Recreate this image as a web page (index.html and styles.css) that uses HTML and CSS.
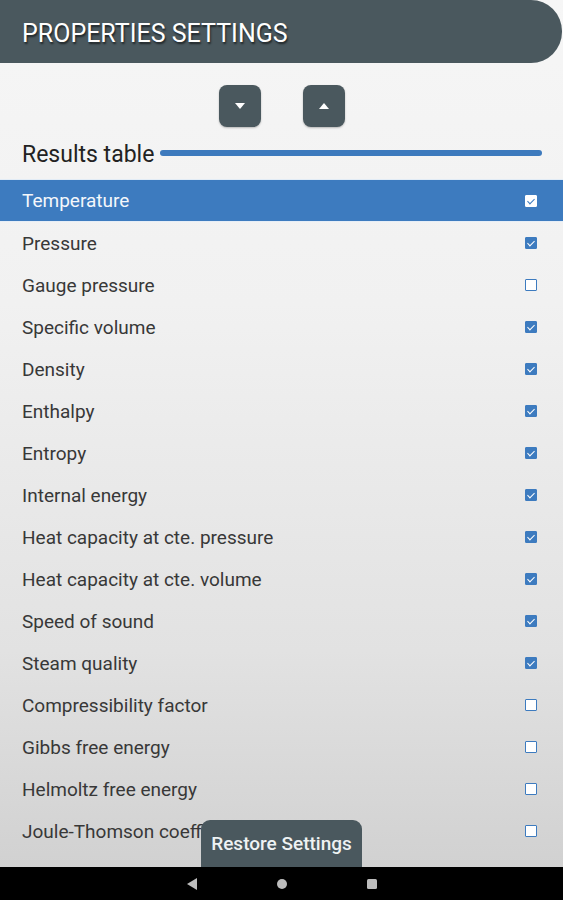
FILE: index.html
```html
<!DOCTYPE html>
<html>
<head>
<meta charset="utf-8">
<link rel="stylesheet" href="styles.css">
</head>
<body>
<div class="screen">
  <div class="main">
    <header class="header"><h1 class="title">PROPERTIES SETTINGS</h1></header>
    <div class="arrows">
      <button class="arrow"><svg width="14" height="14" viewBox="0 0 14 14"><path d="M2 4 H12 L7 10 Z" fill="#fff"/></svg></button>
      <button class="arrow"><svg width="14" height="14" viewBox="0 0 14 14"><path d="M2 10 H12 L7 4 Z" fill="#fff"/></svg></button>
    </div>
    <div class="section">
      <span class="section-label">Results table</span>
      <span class="section-line"></span>
    </div>
    <ul class="list">
      <li class="row selected"><span>Temperature</span><span class="cb on"></span></li>
      <li class="row"><span>Pressure</span><span class="cb on"></span></li>
      <li class="row"><span>Gauge pressure</span><span class="cb"></span></li>
      <li class="row"><span>Specific volume</span><span class="cb on"></span></li>
      <li class="row"><span>Density</span><span class="cb on"></span></li>
      <li class="row"><span>Enthalpy</span><span class="cb on"></span></li>
      <li class="row"><span>Entropy</span><span class="cb on"></span></li>
      <li class="row"><span>Internal energy</span><span class="cb on"></span></li>
      <li class="row"><span>Heat capacity at cte. pressure</span><span class="cb on"></span></li>
      <li class="row"><span>Heat capacity at cte. volume</span><span class="cb on"></span></li>
      <li class="row"><span>Speed of sound</span><span class="cb on"></span></li>
      <li class="row"><span>Steam quality</span><span class="cb on"></span></li>
      <li class="row"><span>Compressibility factor</span><span class="cb"></span></li>
      <li class="row"><span>Gibbs free energy</span><span class="cb"></span></li>
      <li class="row"><span>Helmoltz free energy</span><span class="cb"></span></li>
      <li class="row"><span>Joule-Thomson coefficient</span><span class="cb"></span></li>
    </ul>
    <button class="restore">Restore Settings</button>
  </div>
  <nav class="navbar">
    <svg width="12" height="14" viewBox="0 0 12 14"><path d="M11 1 V13 L1 7 Z" fill="#bdbdbd"/></svg>
    <svg width="12" height="12" viewBox="0 0 12 12"><circle cx="6" cy="6" r="5" fill="#bdbdbd"/></svg>
    <svg width="12" height="12" viewBox="0 0 12 12"><rect x="1" y="1" width="10" height="10" rx="1.5" fill="#bdbdbd"/></svg>
  </nav>
</div>
</body>
</html>
```
FILE: styles.css
```css
html, body {
  margin: 0;
  padding: 0;
}
body {
  font-family: Roboto, "Noto Sans", sans-serif;
  width: 563px;
  height: 900px;
  overflow: hidden;
}
.screen {
  display: flex;
  flex-direction: column;
  height: 900px;
}
.main {
  position: relative;
  flex: 1;
  overflow: hidden;
  background: linear-gradient(to bottom, #f6f6f6 0%, #f1f1f1 35%, #e2e2e2 75%, #d1d1d1 100%);
  display: flex;
  flex-direction: column;
}
.header {
  height: 63px;
  margin-right: 1px;
  background: #4a585e;
  border-radius: 0 31px 31px 0;
  display: flex;
  align-items: center;
  padding-left: 22px;
  flex-shrink: 0;
}
.title {
  margin: 0;
  margin-top: 3px;
  font-size: 25px;
  font-weight: 400;
  color: #ffffff;
  text-shadow: 1px 2px 2px rgba(0,0,0,0.6);
  letter-spacing: 0;
}
.arrows {
  display: flex;
  justify-content: center;
  gap: 42px;
  margin-top: 22px;
  padding-left: 1px;
}
.arrow {
  width: 42px;
  height: 42px;
  border: none;
  border-radius: 8px;
  background: #4a585e;
  display: flex;
  align-items: center;
  justify-content: center;
  padding: 0;
  box-shadow: 0 1px 2px rgba(0,0,0,0.25);
}
.section {
  display: flex;
  align-items: center;
  margin-top: 12px;
  padding: 0 21px 0 22px;
  height: 30px;
}
.section-label {
  font-size: 23px;
  color: #222;
  margin-right: 6px;
}
.section-line {
  flex: 1;
  height: 6px;
  border-radius: 3px;
  background: #3d7abd;
  margin-top: -3px;
}
.list {
  list-style: none;
  margin: 10px 0 0;
  padding: 0;
  border-top: 1px solid #e2ecf6;
}
.row {
  height: 42px;
  display: flex;
  align-items: center;
  justify-content: space-between;
  padding: 0 26px 0 22px;
  font-size: 19px;
  color: #383838;
}
.row.selected {
  background: #3d7bbf;
  color: #f4f7fb;
  height: 41px;
  border-bottom: 1px solid #e6eef7;
}
.cb {
  width: 10px;
  height: 10px;
  border: 1px solid #3d7bbf;
  background: #fff;
  border-radius: 1px;
  position: relative;
}
.cb.on {
  background: #3d7bbf;
}
.cb.on::after {
  content: "";
  position: absolute;
  left: 3px;
  top: 1px;
  width: 3px;
  height: 6px;
  border: solid #fff;
  border-width: 0 1.5px 1.5px 0;
  transform: rotate(45deg);
}
.selected .cb.on {
  background: #fff;
  border-color: #fff;
}
.selected .cb.on::after {
  border-color: #3d7bbf;
}
.restore {
  position: absolute;
  left: 201px;
  bottom: 0;
  width: 161px;
  height: 47px;
  border: none;
  border-radius: 9px 9px 0 0;
  background: #4a585e;
  color: #eef2f3;
  font-family: Roboto, sans-serif;
  font-size: 19px;
  font-weight: 500;
  padding: 0;
}
.navbar {
  height: 33px;
  background: #000;
  display: flex;
  align-items: center;
  justify-content: center;
  gap: 78px;
  flex-shrink: 0;
  padding-top: 0;
}
```
